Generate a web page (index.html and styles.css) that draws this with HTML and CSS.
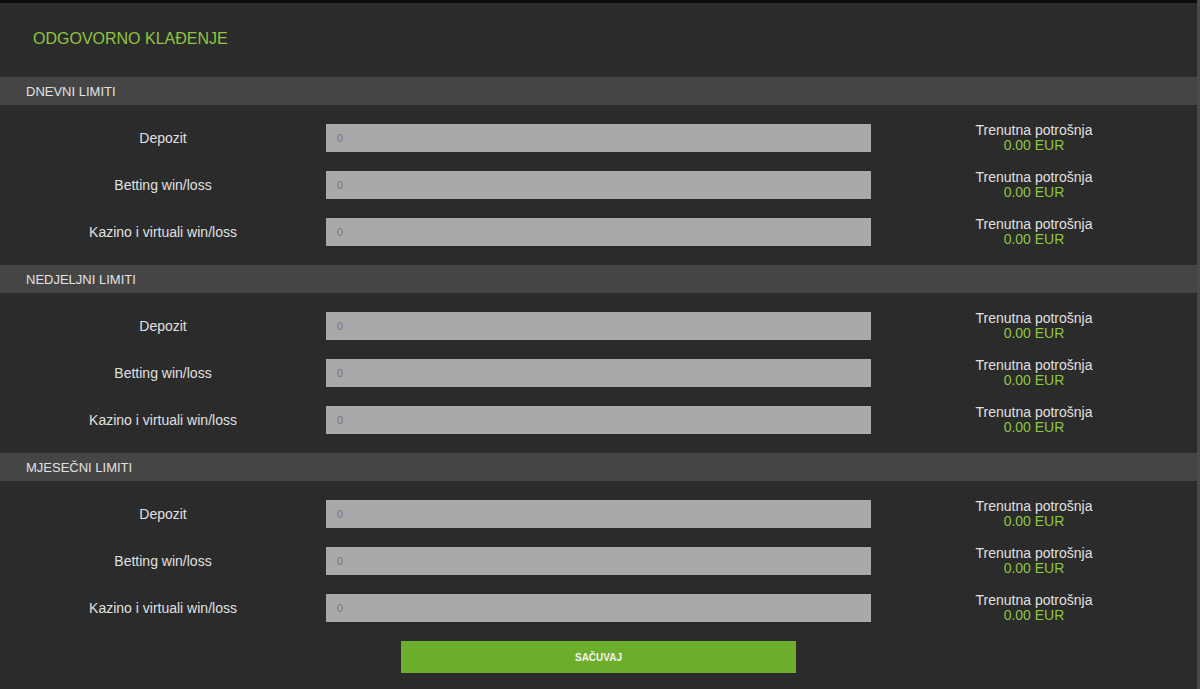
FILE: index.html
```html
<!DOCTYPE html>
<html lang="hr">
<head>
<meta charset="utf-8">
<title>Odgovorno klađenje</title>
<link rel="stylesheet" href="styles.css">
</head>
<body>
<div class="page">
  <div class="topbar"></div>
  <div class="title-area">
    <h1 class="title">ODGOVORNO KLAĐENJE</h1>
  </div>

  <section class="section">
    <div class="section-head">DNEVNI LIMITI</div>
    <div class="rows">
      <div class="row">
        <div class="label">Depozit</div>
        <input class="field" type="text" placeholder="0">
        <div class="spend"><span>Trenutna potrošnja</span><span class="amount">0.00 EUR</span></div>
      </div>
      <div class="row">
        <div class="label">Betting win/loss</div>
        <input class="field" type="text" placeholder="0">
        <div class="spend"><span>Trenutna potrošnja</span><span class="amount">0.00 EUR</span></div>
      </div>
      <div class="row">
        <div class="label">Kazino i virtuali win/loss</div>
        <input class="field" type="text" placeholder="0">
        <div class="spend"><span>Trenutna potrošnja</span><span class="amount">0.00 EUR</span></div>
      </div>
    </div>
  </section>

  <section class="section">
    <div class="section-head">NEDJELJNI LIMITI</div>
    <div class="rows">
      <div class="row">
        <div class="label">Depozit</div>
        <input class="field" type="text" placeholder="0">
        <div class="spend"><span>Trenutna potrošnja</span><span class="amount">0.00 EUR</span></div>
      </div>
      <div class="row">
        <div class="label">Betting win/loss</div>
        <input class="field" type="text" placeholder="0">
        <div class="spend"><span>Trenutna potrošnja</span><span class="amount">0.00 EUR</span></div>
      </div>
      <div class="row">
        <div class="label">Kazino i virtuali win/loss</div>
        <input class="field" type="text" placeholder="0">
        <div class="spend"><span>Trenutna potrošnja</span><span class="amount">0.00 EUR</span></div>
      </div>
    </div>
  </section>

  <section class="section">
    <div class="section-head">MJESEČNI LIMITI</div>
    <div class="rows">
      <div class="row">
        <div class="label">Depozit</div>
        <input class="field" type="text" placeholder="0">
        <div class="spend"><span>Trenutna potrošnja</span><span class="amount">0.00 EUR</span></div>
      </div>
      <div class="row">
        <div class="label">Betting win/loss</div>
        <input class="field" type="text" placeholder="0">
        <div class="spend"><span>Trenutna potrošnja</span><span class="amount">0.00 EUR</span></div>
      </div>
      <div class="row">
        <div class="label">Kazino i virtuali win/loss</div>
        <input class="field" type="text" placeholder="0">
        <div class="spend"><span>Trenutna potrošnja</span><span class="amount">0.00 EUR</span></div>
      </div>
    </div>
  </section>

  <div class="actions">
    <button class="save" type="button">SAČUVAJ</button>
  </div>
</div>
</body>
</html>
```

FILE: styles.css
```css
* {
  box-sizing: border-box;
}

html, body {
  margin: 0;
  padding: 0;
  background: #2b2b2b;
}

body {
  font-family: "Liberation Sans", Arial, sans-serif;
  color: #dcdcdc;
  overflow: hidden;
}

.page {
  width: 1200px;
  height: 689px;
  background: #2b2b2b;
  border-right: 3px solid #4a4a4a;
  overflow: hidden;
}

.topbar {
  height: 3px;
  background: #0c0c0c;
}

.title-area {
  height: 74px;
  display: flex;
  align-items: center;
  padding-left: 33px;
  padding-bottom: 2px;
}

.title {
  margin: 0;
  font-size: 16px;
  font-weight: normal;
  color: #8dc63f;
}

.section-head {
  height: 28px;
  background: #454545;
  display: flex;
  align-items: center;
  padding-left: 26px;
  font-size: 13px;
  color: #e2e2e2;
}

.rows {
  display: flex;
  flex-direction: column;
  gap: 19px;
  padding: 18px 0 20px;
}

.row {
  display: grid;
  grid-template-columns: 326px 545px 1fr;
  align-items: center;
  height: 28px;
}

.label {
  text-align: center;
  font-size: 14px;
  color: #e0e0e0;
}

.field {
  height: 28px;
  width: 545px;
  border: none;
  outline: none;
  background: #a9a9a9;
  padding: 0 0 0 11px;
  font-family: "Liberation Sans", Arial, sans-serif;
  font-size: 11px;
  color: #6f6f6f;
}

.field::placeholder {
  color: #747474;
}

.spend {
  display: flex;
  flex-direction: column;
  align-items: center;
  font-size: 14px;
  line-height: 15px;
  color: #e0e0e0;
}

.amount {
  color: #8dc63f;
}

.actions {
  display: flex;
  justify-content: center;
}

.save {
  width: 395px;
  height: 32px;
  border: none;
  background: #6cae2b;
  color: #f2f2f2;
  font-family: "Liberation Sans", Arial, sans-serif;
  font-size: 10px;
  font-weight: bold;
  cursor: pointer;
}
```
